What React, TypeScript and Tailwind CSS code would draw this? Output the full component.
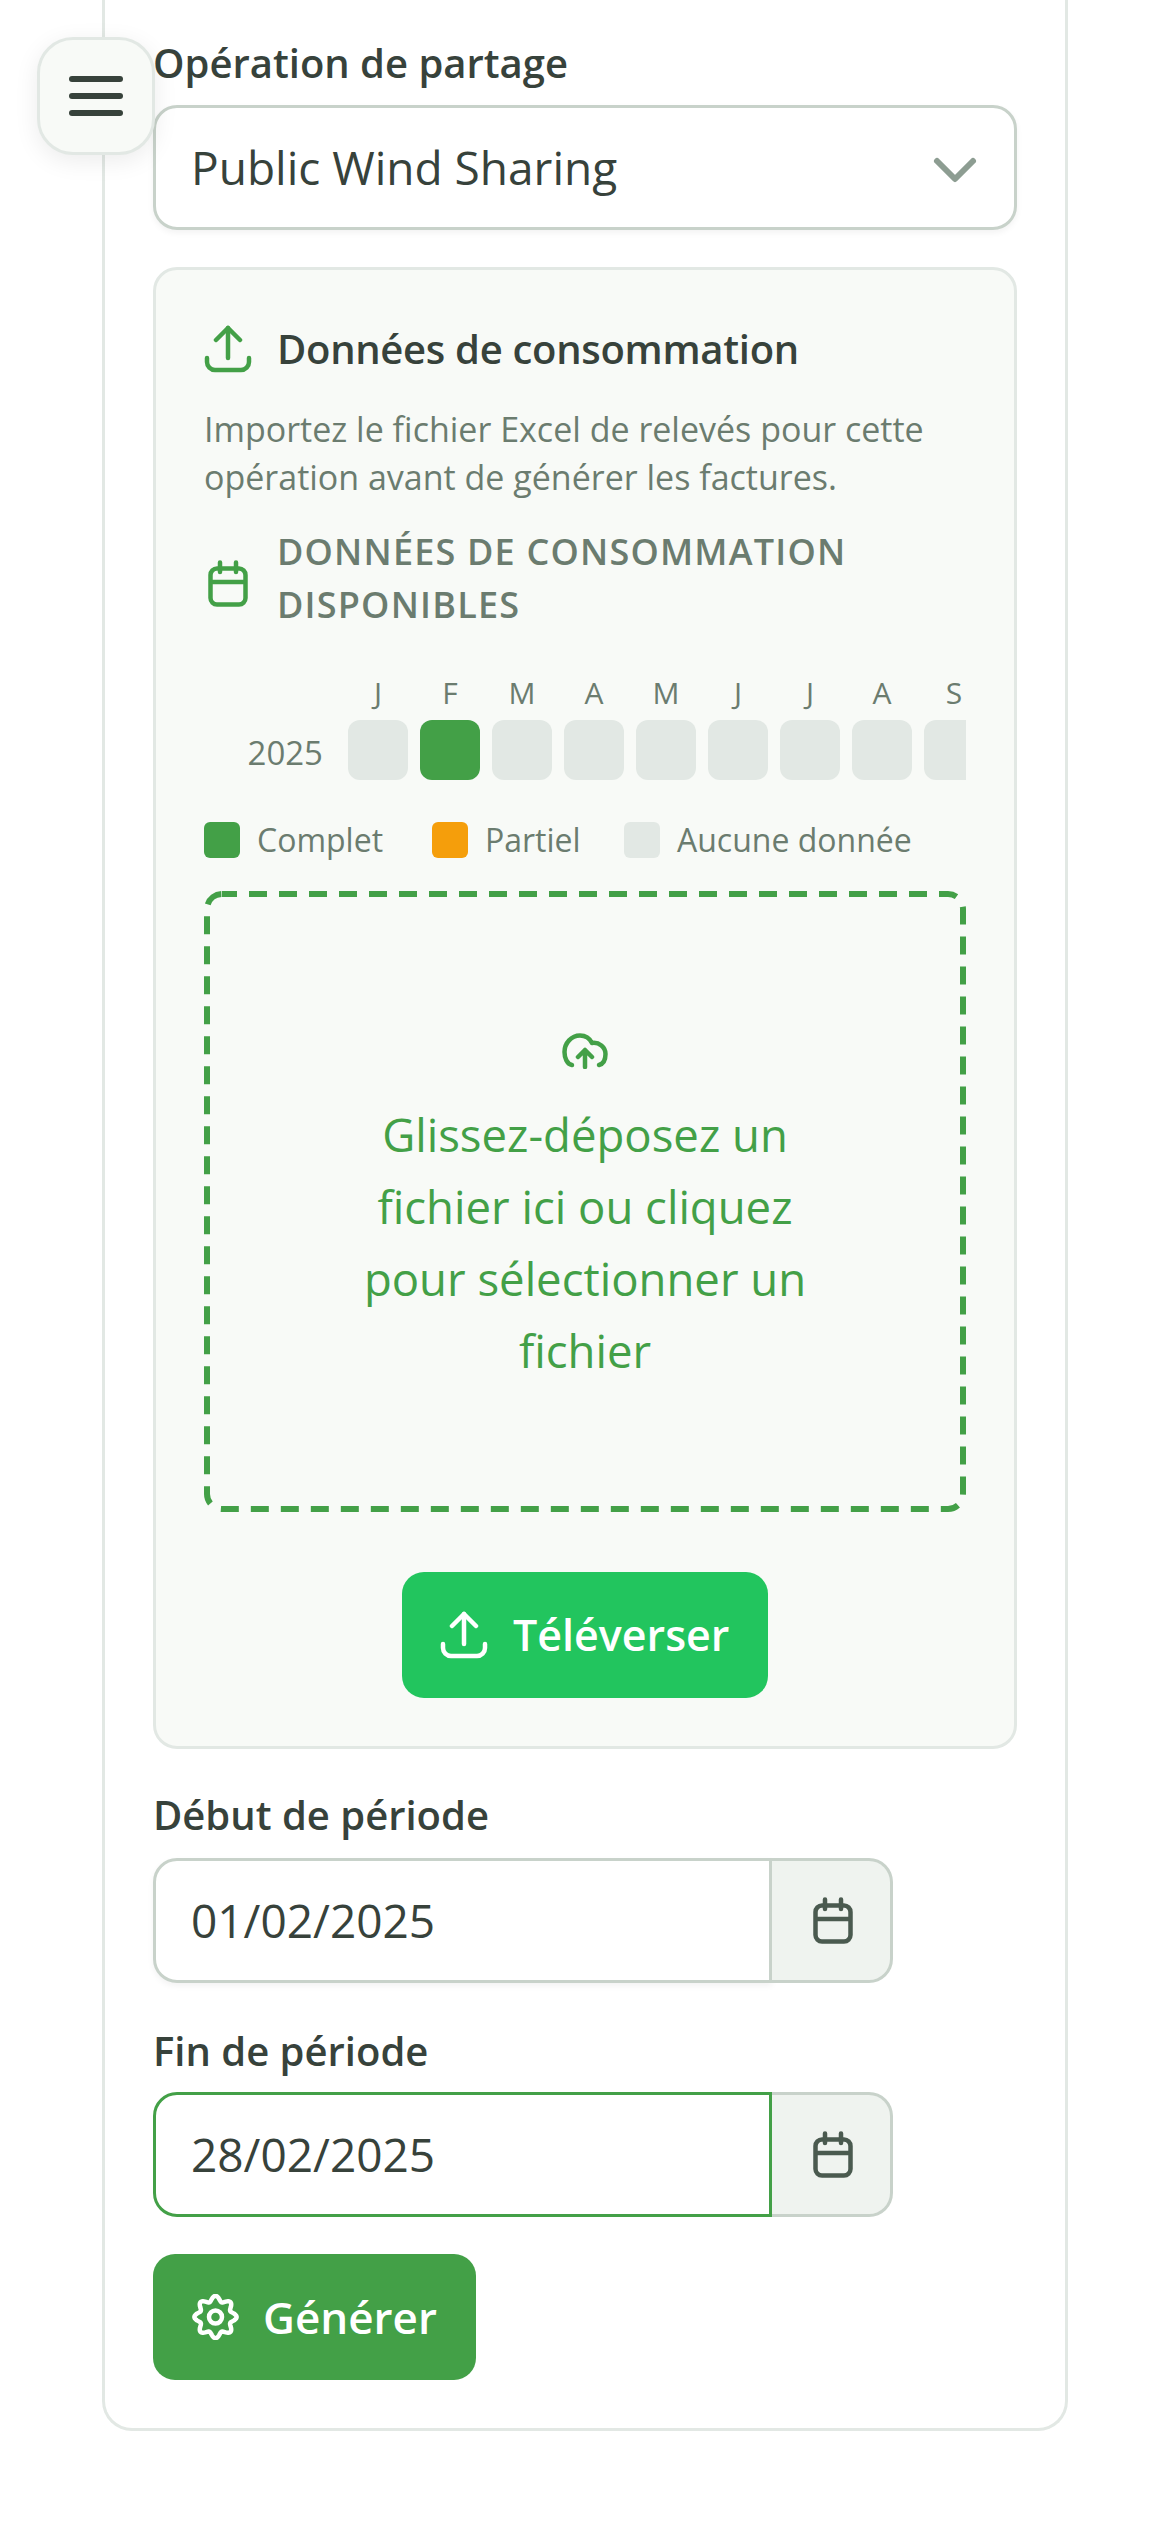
import React from "react";
import { ChevronDown } from "lucide-react";

const months = ["J", "F", "M", "A", "M", "J", "J", "A", "S"];

function CalendarIcon({ className }: { className: string }) {
  return (
    <svg width="40" height="47" viewBox="0 0 40 47" fill="none" stroke="currentColor" strokeWidth="4.5" strokeLinecap="round" className={className}>
      <rect x="2.5" y="8.5" width="35" height="36" rx="6.5" />
      <path d="M2.5 22H37.5" strokeLinecap="butt" />
      <path d="M12 2.5V12M28 2.5V12" />
    </svg>
  );
}

function TrayIcon({ className }: { className: string }) {
  return (
    <svg width="48" height="48" viewBox="0 0 48 48" fill="none" stroke="currentColor" strokeWidth="4.5" strokeLinecap="round" strokeLinejoin="round" className={className}>
      <path d="M24 3V33" />
      <path d="M12 15L24 3L36 15" />
      <path d="M3 33V37a8 8 0 0 0 8 8H37a8 8 0 0 0 8-8V33" />
    </svg>
  );
}

function CloudIcon({ className }: { className: string }) {
  return (
    <svg width="46" height="36" viewBox="0 0 46 36" fill="none" stroke="currentColor" strokeWidth="4.5" strokeLinecap="round" strokeLinejoin="round" className={className}>
      <path d="M10 32C5 31 2.5 25 2.5 19C2.5 10 9.5 2.5 18 2.5C24 2.5 28 6 30 10C37 9 43.5 14 43.5 21C43.5 27 41 31 37 32" />
      <path d="M23 34V17M16 24L23 17L30 24" />
    </svg>
  );
}

function gearPath() {
  const pts: string[] = [];
  for (let i = 0; i < 160; i++) {
    const t = (i / 160) * Math.PI * 2;
    const r = 18.5 + 2.6 * Math.cos(8 * t);
    const x = 23.5 + r * Math.sin(t);
    const y = 23 - r * Math.cos(t);
    pts.push(`${i === 0 ? "M" : "L"}${x.toFixed(2)} ${y.toFixed(2)}`);
  }
  return pts.join("") + "Z";
}

function GearIcon() {
  return (
    <svg width="47" height="46" viewBox="0 0 47 46" fill="none" stroke="currentColor" strokeWidth="4.5" strokeLinejoin="round">
      <path d={gearPath()} />
      <circle cx="23.5" cy="23" r="6.5" />
    </svg>
  );
}

function Label({ children }: { children: React.ReactNode }) {
  return <div className="h-[63px] leading-[61px] text-[40px] font-semibold text-[#37423b]">{children}</div>;
}

function DateField({ value, focused }: { value: string; focused?: boolean }) {
  return (
    <div className="flex h-[125px] w-[740px]">
      <div className={`flex-1 flex items-center bg-white rounded-l-[24px] border-[3px] pl-[35px] text-[46px] text-[#37423b] ${focused ? "border-[#43a047]" : "border-[#c8d2ca] shadow-[0_3px_6px_rgba(0,0,0,0.05)]"}`}>
        {value}
      </div>
      <div className="w-[121px] flex items-center justify-center pl-[4px] bg-[#eff3ef] rounded-r-[24px] border-[3px] border-l-0 border-[#c8d2ca]">
        <CalendarIcon className="text-[#4a5a4f]" />
      </div>
    </div>
  );
}

export default function App() {
  return (
    <div className="relative min-h-[2532px] bg-white font-['Open_Sans',sans-serif]">
      <button className="absolute left-[37px] top-[37px] w-[118px] h-[118px] rounded-[36px] bg-[#f8faf7] border-[3px] border-[#e2e8e4] shadow-[0_6px_24px_rgba(0,0,0,0.08)] flex flex-col items-center justify-center gap-[11px]">
        <span className="block w-[54px] h-[6px] rounded-full bg-[#37423b]" />
        <span className="block w-[54px] h-[6px] rounded-full bg-[#37423b]" />
        <span className="block w-[54px] h-[6px] rounded-full bg-[#37423b]" />
      </button>
      <div className="ml-[102px] w-[966px] border-[3px] border-t-0 border-[#e2e8e4] rounded-b-[30px] px-[48px] pt-[32px] pb-[48px]">
        <Label>Opération de partage</Label>
        <div className="mt-[10px] h-[125px] flex items-center justify-between rounded-[24px] border-[3px] border-[#c8d2ca] bg-white pl-[35px] pr-[23px] text-[46px] text-[#37423b] shadow-[0_3px_6px_rgba(0,0,0,0.05)]">
          <span>Public Wind Sharing</span>
          <ChevronDown size={72} strokeWidth={2} className="text-[#8d9d92] mt-[4px]" />
        </div>

        <div className="mt-[37px] rounded-[24px] border-[3px] border-[#e2e8e4] bg-[#f8faf7] px-[48px] pt-[47px] pb-[48px]">
          <div className="flex items-center h-[64px]">
            <TrayIcon className="text-[#43a047] mr-[25px]" />
            <span className="text-[40px] font-semibold text-[#37423b] tracking-[-0.3px]">Données de consommation</span>
          </div>
          <p className="mt-[24px] text-[34px] leading-[48px] text-[#6b7c6f]">
            Importez le fichier Excel de relevés pour cette opération avant de générer les factures.
          </p>
          <div className="mt-[24px] flex items-center">
            <CalendarIcon className="text-[#43a047] ml-[4px] mr-[29px] mt-[10px]" />
            <span className="flex-1 text-[36px] leading-[53px] font-semibold uppercase tracking-[1.2px] text-[#6b7c6f]">Données de consommation disponibles</span>
          </div>

          <div className="mt-[44px] flex h-[36px] pl-[144px] gap-[12px]">
            {months.map((m, i) => (
              <div key={i} className="w-[60px] shrink-0 text-center text-[30px] leading-[36px] text-[#6b7c6f]">{m}</div>
            ))}
          </div>
          <div className="mt-[9px] flex gap-[12px] items-center">
            <div className="w-[132px] shrink-0 pr-[13px] pt-[5px] text-right text-[33px] text-[#6b7c6f]">2025</div>
            {months.map((m, i) => (
              <div key={i} className={`h-[60px] shrink-0 ${i === 8 ? "w-[42px] rounded-l-[12px]" : "w-[60px] rounded-[12px]"} ${i === 1 ? "bg-[#43a047]" : "bg-[#e2e8e4]"}`} />
            ))}
          </div>

          <div className="mt-[42px] flex items-center h-[36px] text-[32px] text-[#6b7c6f]">
            <span className="w-[36px] h-[36px] rounded-[6px] bg-[#43a047] mr-[17px]" />
            <span className="w-[175px]">Complet</span>
            <span className="w-[36px] h-[36px] rounded-[6px] bg-[#f59e0b] mr-[17px]" />
            <span className="w-[139px]">Partiel</span>
            <span className="w-[36px] h-[36px] rounded-[6px] bg-[#e2e8e4] mr-[17px]" />
            <span>Aucune donnée</span>
          </div>

          <div className="relative mt-[33px] h-[621px] flex flex-col items-center text-[#43a047]">
            <svg viewBox="0 0 762 621" fill="none" className="absolute inset-0 w-full h-full">
              <rect x="3" y="3" width="756" height="615" rx="15" stroke="currentColor" strokeWidth="6" strokeDasharray="18 12" strokeDashoffset="3" />
            </svg>
            <CloudIcon className="mt-[142px]" />
            <div className="mt-[29px] w-[480px] text-center text-[45.5px] leading-[72px]">Glissez-déposez un fichier ici ou cliquez pour sélectionner un fichier</div>
          </div>

          <div className="mt-[60px] flex justify-center">
            <button className="w-[366px] h-[126px] rounded-[22px] bg-[#22c55e] flex items-center pl-[38px] gap-[25px] text-white text-[43px] font-semibold">
              <TrayIcon className="" />
              Téléverser
            </button>
          </div>
        </div>

        <div className="mt-[35px]"><Label>Début de période</Label></div>
        <div className="mt-[11px]"><DateField value="01/02/2025" /></div>
        <div className="mt-[37px]"><Label>Fin de période</Label></div>
        <div className="mt-[9px]"><DateField value="28/02/2025" focused /></div>
        <button className="mt-[37px] w-[323px] h-[126px] rounded-[22px] bg-[#43a047] flex items-center pl-[39px] gap-[24px] text-white text-[44px] font-semibold">
          <GearIcon />
          Générer
        </button>
      </div>
    </div>
  );
}
